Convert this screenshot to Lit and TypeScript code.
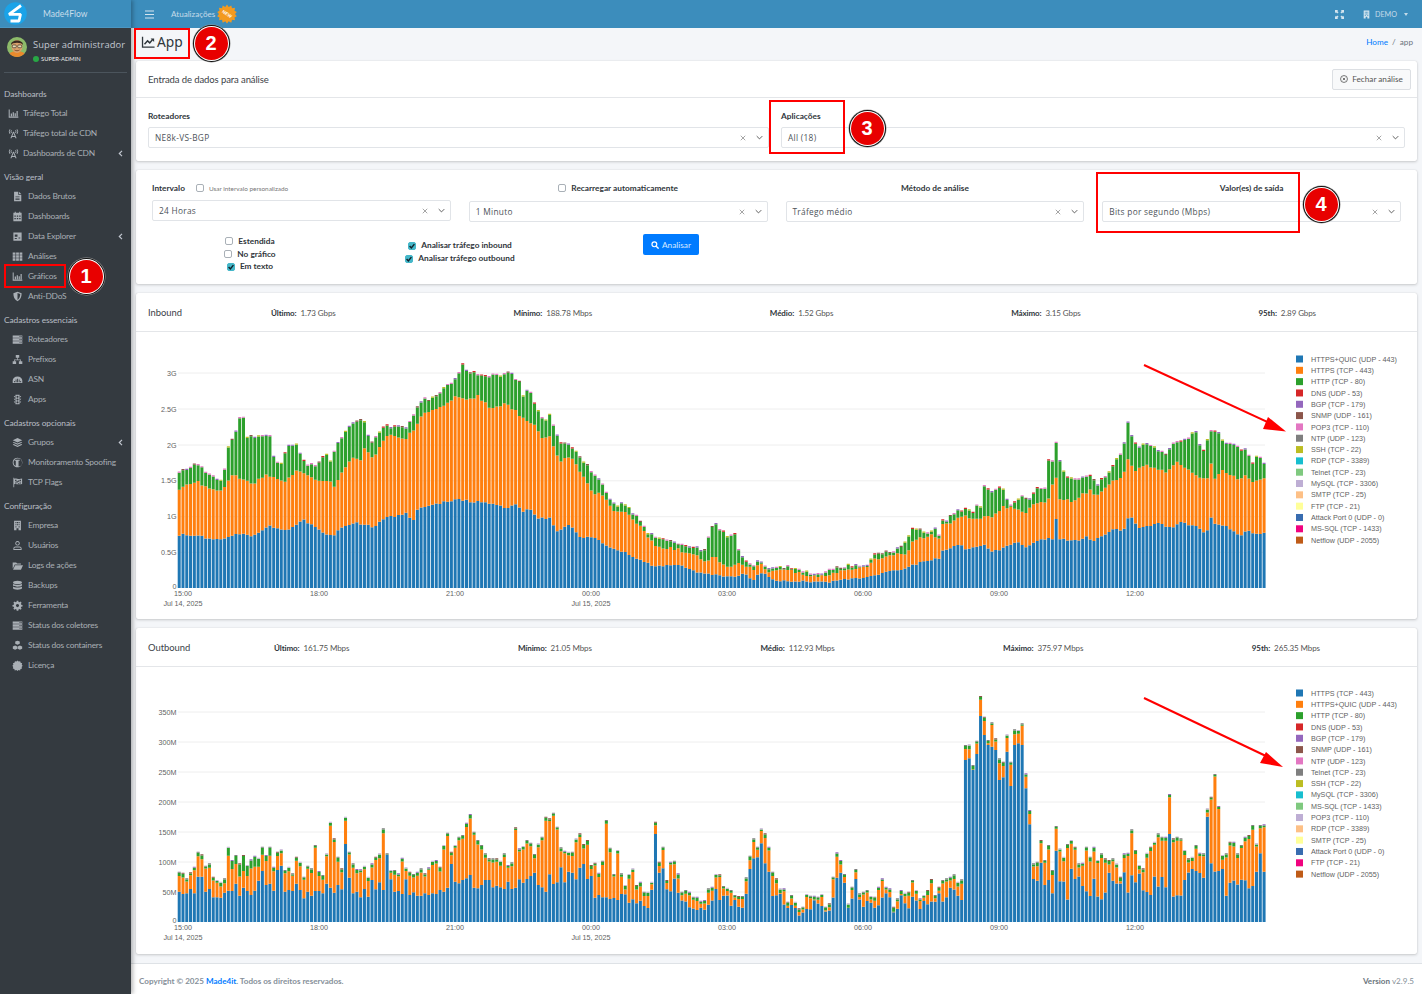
import { LitElement, html, css, svg } from "lit";
import { customElement, property } from "lit/decorators.js";

type P = [number, number];
const hash = (i: number) => { const v = Math.sin(i * 12.9898 + 4.1) * 43758.5453; return v - Math.floor(v); };
const pairs = (a: number[], ox: number, sx: number, oy: number): P[] => {
  const r: P[] = [];
  for (let i = 0; i < a.length; i += 2) r.push([ox + a[i] / sx, oy + a[i + 1] / 3]);
  return r;
};
const interp = (pts: P[], x: number) => {
  if (x <= pts[0][0]) return pts[0][1];
  for (let i = 1; i < pts.length; i++) {
    if (x <= pts[i][0]) {
      const [x0, y0] = pts[i - 1], [x1, y1] = pts[i];
      return y0 + ((y1 - y0) * (x - x0)) / (x1 - x0 || 1);
    }
  }
  return pts[pts.length - 1][1];
};
const nearest = (pts: P[], x: number) => {
  let best = pts[0], d = 1e9;
  for (const p of pts) { const q = Math.abs(p[0] - x); if (q < d) { d = q; best = p; } }
  return best[1];
};

const X0 = 177.7, PITCH = 3.78, BW = 3.02, N = 288;
const C = { blue: "#1f77b4", orange: "#ff7f0e", green: "#2ca02c" };
const CAPS1 = ["#d62728", "#9467bd", "#8c564b", "#e377c2", "#bcbd22", "#9467bd", "#e377c2"];
const CAPS2 = ["#7f7f7f", "#9467bd", "#8c564b", "#c5b0d5", "#7f7f7f"];
const rect = (x: number, top: number, bot: number) => `M${x.toFixed(2)} ${top.toFixed(2)}H${(x + BW).toFixed(2)}V${bot.toFixed(2)}H${x.toFixed(2)}Z`;

function layers(rows: { b: number; o: number; g: number; t: number; cap: string }[], base: number) {
  let db = "", dog = "", dg = "";
  const caps: Record<string, string> = {};
  rows.forEach((r, i) => {
    const x = X0 + i * PITCH;
    db += rect(x, r.b, base);
    dog += rect(x, r.o, r.b);
    dg += rect(x, r.g, r.o);
    caps[r.cap] = (caps[r.cap] || "") + rect(x, r.t, r.g);
  });
  return { db, dog, dg, caps };
}

/* ------- inbound data, anchors read from the picture ------- */
const inB = [
  ...pairs([113,562,125,552,170,557,240,570,300,550,340,560,390,527,440,543,490,510,560,552,580,555,600,537,640,517,700,530,740,503,800,490,820,512,830,477,870,465,900,460,950,448,1000,455,1050,458,1100,475,1130,462,1150,485,1170,473,1190,500], 140, 3, 350),
  ...pairs([0,505,30,505,50,545,90,522,120,565,160,558,200,590,250,605,300,630,350,650,420,645,480,670,520,675,580,680,610,670,640,690,660,665,700,690,800,695,850,697,900,690,1000,680,1050,665,1100,655,1150,632,1200,625], 540, 3, 350),
  ...pairs([0,605,60,585,80,600,130,585,160,605,230,578,260,592,310,565,340,567,347,498,358,567,400,575,440,560,460,575,520,535,550,540,565,505,575,502,600,538,650,518,700,535,720,515,780,535,800,552,812,502,825,520,860,530,900,558,915,542,950,550,975,550], 940, 3, 350),
];
const inO = [
  ...pairs([113,423,125,410,170,395,240,428,280,375,340,400,380,372,430,398,470,362,520,388,570,390,585,412,600,370,640,318,660,340,670,290,700,325,740,255,800,265,830,225,850,190,900,172,950,140,1000,150,1010,135,1050,175,1100,160,1150,205,1190,225], 140, 3, 350),
  ...pairs([0,260,30,262,60,335,90,320,130,375,160,430,190,432,220,485,260,490,300,530,350,590,400,595,470,615,490,635,525,620,560,655,600,635,640,660,660,640,680,665,750,660,800,675,850,680,900,665,980,650,1010,625,1060,615,1100,610,1120,570,1180,555,1200,570], 540, 3, 350),
  ...pairs([0,520,30,525,60,502,90,500,120,510,130,498,155,505,190,470,220,475,260,485,290,455,320,462,347,375,360,448,400,452,450,420,470,440,510,400,550,375,563,322,580,362,620,345,680,368,710,338,750,360,770,380,800,390,812,340,825,385,850,358,900,395,915,375,940,395,975,388], 940, 3, 350),
];
const inG = [
  ...pairs([113,373,130,363,170,345,240,398,250,385,265,296,285,258,300,205,312,203,320,265,390,255,400,318,420,345,445,290,470,285,500,350,530,345,560,310,575,340,590,282,640,220,670,205,690,280,740,228,800,235,830,178,850,140,870,155,950,85,968,38,980,65,1000,70,1050,80,1110,72,1140,100,1150,142,1165,110,1190,180], 140, 3, 350),
  ...pairs([0,198,15,218,30,196,60,280,85,285,130,335,160,370,190,412,220,465,260,465,280,495,300,510,320,548,350,565,390,570,440,595,470,597,490,610,510,545,525,518,550,550,565,560,580,550,590,555,598,612,640,650,655,630,680,660,740,652,800,670,850,673,890,655,910,650,980,645,1010,607,1060,610,1100,578,1115,535,1140,535,1160,550,1185,540,1200,558], 540, 3, 350),
  ...pairs([0,508,20,520,30,498,60,480,100,485,110,468,120,485,132,408,150,430,185,410,200,450,210,465,245,440,265,455,290,412,320,415,325,330,340,330,347,277,360,330,370,367,400,395,420,385,450,378,470,405,490,385,510,365,550,295,563,212,575,262,600,295,620,283,650,300,680,315,700,282,740,268,765,240,780,285,790,302,810,248,835,248,855,280,890,280,900,305,915,292,935,342,950,315,975,342], 940, 3, 350),
];
const inbound = () => {
  const rows = [];
  for (let i = 0; i < N; i++) {
    const x = X0 + i * PITCH + 1.5;
    const b = interp(inB, x) + (hash(i) - 0.5) * 2.2;
    const o = Math.min(b - 1, interp(inO, x) + (hash(i + 300) - 0.5) * 3);
    const g = Math.min(o - 0.6, interp(inG, x) + (hash(i + 600) - 0.5) * 3.6);
    rows.push({ b, o, g, t: g - 1.2, cap: CAPS1[Math.floor(hash(i + 900) * CAPS1.length)] });
  }
  return layers(rows, 588);
};

/* ------- outbound data ------- */
const outT = [
  ...pairs([113,545,124,548,136,565,147,547,158,530,170,485,181,493,192,527,204,520,215,560,226,570,238,575,249,565,260,470,272,510,283,495,294,520,306,495,317,525,328,508,340,497,351,503,362,470,373,495,385,470,396,530,408,485,419,478,430,540,442,530,453,550,464,500,476,515,487,560,498,527,510,535,521,465,532,543,544,555,555,490,566,395,578,445,589,500,600,535,612,380,623,485,634,520,646,537,657,538,668,527,680,560,691,520,702,500,714,490,725,415,736,490,748,540,759,540,770,550,782,503,793,532,804,545,816,552,827,545,838,535,850,550,861,532,872,512,884,510,895,530,906,465,918,428,929,485,940,465,952,440,963,435,974,398,986,372,997,425,1008,450,1020,465,1031,490,1042,505,1054,505,1065,505,1076,512,1088,490,1099,525,1110,517,1122,412,1133,475,1144,468,1156,450,1167,458,1178,492,1190,460,1201,440,1212,380,1224,385,1240,368,1251,410,1262,472,1274,482,1285,485,1296,485,1308,445,1319,430,1330,462,1342,450,1353,525,1364,518,1376,548,1387,512,1398,390,1410,473,1421,552,1433,480,1444,550,1455,585,1466,552,1478,535,1489,585], 140, 3, 690),
  ...pairs([0,575,10,605,22,575,30,395,38,515,45,470,52,570,60,515,68,512,76,550,84,605,92,600,100,605,110,620,120,632,128,630,136,595,143,590,150,552,158,553,165,588,175,593,182,600,190,615,205,618,212,562,220,497,228,445,235,470,243,415,250,430,258,470,266,545,275,565,287,595,296,635,303,615,310,635,318,655,325,650,333,612,345,617,355,620,362,612,370,650,378,640,385,560,394,487,402,510,410,552,418,640,425,590,432,537,440,610,447,605,455,600,462,618,470,620,477,590,485,565,493,590,500,595,507,650,515,625,522,600,530,608,537,605,545,570,552,600,560,625,568,615,575,600,583,567,590,615,598,590,606,570,614,565,622,560,630,553,637,575,645,568,652,165,660,163,667,225,675,152,683,18,690,80,698,150,705,97,712,145,720,205,727,215,735,133,742,215,750,118,758,120,765,100,773,250,780,360,788,520,795,515,803,450,810,510,818,465,826,540,833,408,841,475,849,500,857,462,864,450,872,470,880,520,888,518,895,470,903,500,910,470,918,510,925,490,933,505,940,510,947,505,955,520,962,560,970,490,978,488,986,418,993,480,1001,525,1009,535,1017,488,1024,470,1032,455,1040,430,1047,440,1055,440,1062,312,1070,445,1078,440,1085,445,1093,480,1100,505,1108,500,1115,465,1123,488,1130,490,1138,355,1145,320,1153,252,1160,348,1168,495,1175,490,1183,455,1190,455,1198,490,1205,465,1213,440,1220,435,1228,405,1235,460,1243,405,1250,403], 640, 2.005, 690),
];
const outB8 = [605,612,610,597,610,560,560,605,597,622,622,623,608,602,603,581,617,593,603,615,602,572,543,585,581,602,540,527,605,600,603,581,600,625,605,617,603,603,610,581,593,608,585,598,462,563,610,605,622,597,620,570,598,577,600,495,568,605,603,612,568,615,607,617,617,610,615,610,612,600,605,593,522,575,580,570,565,555,593,595,585,570,570,592,587,592,597,575,597,593,568,578,567,558,548,585,592,605,553,582,577,532,577,545,548,568,533,522,567,558,623,615,622,622,627,624,630,612,613,638,628,640,632];
const outBSpikes = pairs([30,432,38,548,45,535,220,537,228,505,235,502,243,460,250,520,258,545,430,567,645,630,652,210,660,205,667,240,675,192,683,78,690,135,698,165,705,170,712,180,720,270,727,262,735,185,742,288,750,165,758,160,765,165,773,295,780,403,788,567,795,572,803,518,810,585,826,610,833,482,1062,432,1138,380,1145,520,1160,543,1235,545,1243,490,1250,545], 640, 2.005, 690);
const outGreen = (i: number) => {
  const thick: Record<number, number> = { 13: 8, 14: 8, 15: 8, 16: 12, 17: 15, 18: 10, 19: 8, 20: 10, 21: 8, 22: 7, 23: 5, 24: 8 };
  if (thick[i]) return thick[i];
  return 1.4 + hash(i + 40) * 2.6;
};
const outbound = () => {
  const rows = [];
  for (let i = 0; i < N; i++) {
    const x = X0 + i * PITCH + 1.5;
    const t = nearest(outT, x);
    const H = 922 - t;
    let b: number;
    if (i < outB8.length) b = 690 + outB8[i] / 3;
    else {
      const sp = outBSpikes.find((s) => Math.abs(s[0] - x) < 1.9);
      if (sp) b = sp[1];
      else if (x < 960) b = 922 - H * (0.45 + hash(i + 70) * 0.4);
      else b = 922 - Math.min(H * 0.85, 22 + hash(i + 70) * 32);
    }
    const g = t + 1.1;
    const o = Math.min(g + outGreen(i), Math.max(b - 0.4, g + 0.6));
    rows.push({ b: Math.max(b, o), o, g, t, cap: CAPS2[Math.floor(hash(i + 900) * CAPS2.length)] });
  }
  return layers(rows, 922);
};

const LEG_COLORS = ["#1f77b4", "#ff7f0e", "#2ca02c", "#d62728", "#9467bd", "#8c564b", "#e377c2", "#7f7f7f", "#bcbd22", "#17becf", "#7fc97f", "#beaed4", "#fdc086", "#ffff99", "#386cb0", "#f0027f", "#bf5b17"];

@customElement("flow-chart")
class FlowChart extends LitElement {
  static styles = css`
    :host { display: block; }
    svg { display: block; width: 1281px; height: 287px; }
    text { font-family: "Liberation Sans", Arial, sans-serif; font-size: 7.200px; fill: #5f5f5f; }
  `;
  @property({ attribute: false }) cfg: any;
  render() {
    const c = this.cfg;
    if (!c) return html``;
    const d = c.data;
    return html`<svg viewBox="136 ${c.top} 1281 287">
      ${c.ticks.map((t: [string, number]) => svg`
        <line x1="178" x2="1265" y1=${t[1]} y2=${t[1]} stroke="#eeeeee" stroke-width="1"></line>
        <text x="176.500" y=${t[1] + 2.5} text-anchor="end">${t[0]}</text>`)}
      <text x="176.500" y=${c.base + 0.5} text-anchor="end">0</text>
      <path d=${d.db} fill=${C.blue}></path>
      <path d=${d.dog} fill=${C.orange}></path>
      <path d=${d.dg} fill=${C.green}></path>
      ${Object.keys(d.caps).map((k) => svg`<path d=${d.caps[k]} fill=${k}></path>`)}
      ${["15:00", "18:00", "21:00", "00:00", "03:00", "06:00", "09:00", "12:00"].map((l, i) => svg`
        <text x=${183 + i * 136} y=${c.base + 8} text-anchor="middle">${l}</text>`)}
      <text x="183" y=${c.base + 18} text-anchor="middle">Jul 14, 2025</text>
      <text x="591" y=${c.base + 18} text-anchor="middle">Jul 15, 2025</text>
      ${c.legend.map((l: string, i: number) => svg`
        <rect x="1296" y=${c.legendY + i * 11.32 - 3.5} width="7" height="7" fill=${LEG_COLORS[i]}></rect>
        <text x="1311" y=${c.legendY + i * 11.32 + 2.6}>${l}</text>`)}
    </svg>`;
  }
}

const I: Record<string, any> = {
  bars: svg`<path d="M1 2v12h14v-1.5H2.500V2zM4 8h1.800v4H4zM6.800 6h1.800v6H6.800zM9.600 7.500h1.800V12H9.600zM12.400 4.500h1.800V12h-1.800z"/>`,
  tower: svg`<path d="M7.300 5.500h1.400L12.500 15h-1.700l-.6-2H5.800l-.6 2H3.500zM6.400 11.500h3.200L8 7.300z"/><path d="M2.800 2a7 7 0 0 0 0 6.500M13.200 2a7 7 0 0 1 0 6.500M5 3.300a3.800 3.800 0 0 0 0 3.800M11 3.300a3.800 3.800 0 0 1 0 3.800" fill="none" stroke="currentColor" stroke-width="1.400"/>`,
  file: svg`<path fill-rule="evenodd" d="M3 1h6v4.500h4.500V15H3zM5 8v1h6V8zM5 10v1h6v-1zM5 12v1h6v-1z"/><path d="M10 1l3.500 3.500H10z"/>`,
  cal: svg`<path fill-rule="evenodd" d="M4 1h1.500v1.500h5V1H12v1.500h2V15H2V2.500h2zM3.500 6.500v2h2v-2zM7 6.500v2h2v-2zM10.500 6.500v2h2v-2zM3.500 10v2h2v-2zM7 10v2h2v-2zM10.500 10v2h2v-2z"/>`,
  form: svg`<path fill-rule="evenodd" d="M2 2h12v12H2zM4 5v3.500h4V5zM4 10v1.500h3V10zM9.500 9.500V11H12V9.500z"/>`,
  grid: svg`<path d="M1 2h4v3.500H1zM6 2h4v3.500H6zM11 2h4v3.500h-4zM1 6.300h4v3.500H1zM6 6.300h4v3.500H6zM11 6.300h4v3.500h-4zM1 10.600h4v3.500H1zM6 10.600h4v3.500H6zM11 10.600h4v3.500h-4z"/>`,
  shield: svg`<path fill-rule="evenodd" d="M8 1l6 2.300c0 5-1.500 9.200-6 11.700C3.500 12.500 2 8.300 2 3.300zM8 3v10c2.800-1.900 3.900-4.800 4-8.500z"/>`,
  server: svg`<path fill-rule="evenodd" d="M1 2h14v3.400H1zM1 6.300h14v3.400H1zM1 10.600h14V14H1zM11 3v1.300h1.300V3zM13 3v1.300h1V3zM11 7.300v1.300h1.300V7.300zM13 7.300v1.300h1V7.300zM11 11.600v1.300h1.300v-1.300zM13 11.600v1.300h1v-1.300z"/>`,
  sitemap: svg`<path d="M5.500 1.500h5v4h-5zM1 10.500h5v4H1zM10 10.500h5v4h-5zM7.500 5.500h1V8H13v2.500h-1V9H4v1.500H3V8h4.500z"/>`,
  asn: svg`<path fill-rule="evenodd" d="M1 13V9.500C1 6 4 3.500 8 3.500s7 2.500 7 6V13zM3 10v2h1.200v-2zM5.300 8v4h1.200V8zM7.500 7v5h1.200V7zM9.800 8v4H11V8zM12 10v2h1.200v-2z"/>`,
  traffic: svg`<path fill-rule="evenodd" d="M5 1h6v14H5zM8 2.500a1.500 1.500 0 1 0 .001 0zM8 6.500a1.500 1.500 0 1 0 .001 0zM8 10.500a1.500 1.500 0 1 0 .001 0z"/><path d="M2.500 3H4.500V5.500zM2.500 7H4.500V9.500zM2.500 11H4.500V13.500zM13.500 3H11.500V5.500zM13.500 7H11.500V9.500zM13.500 11H11.500V13.500z"/>`,
  layers: svg`<path d="M8 1.500l7 3.300-7 3.300-7-3.300z"/><path d="M2.600 7.100L8 9.600l5.400-2.500L15 8l-7 3.200L1 8z"/><path d="M2.600 10.300L8 12.800l5.400-2.500 1.600.9-7 3.300-7-3.300z"/>`,
  spoof: svg`<path fill-rule="evenodd" d="M8 1a7 7 0 1 1-.001 0zM8 2.300a5.700 5.700 0 0 0-2.500 10.800V5.500H3.800V4h7.400v1.500H9.500v8.300A5.700 5.700 0 0 0 8 2.300z"/>`,
  flag: svg`<path fill-rule="evenodd" d="M2 1h1.200v1.400C6 1 9 4.300 14.700 2.300V10C9 12 6 9 3.200 10.400V15H2zM4.500 4v2h2V4zM8.500 5v2h2V5zM4.500 8v1.500h2V8zM8.500 9v1.300h2V9zM11 4v2h2V4zM11 8v1.500h2V8zM6.500 6v2h2V6z"/>`,
  build: svg`<path fill-rule="evenodd" d="M3 1h10v14H9.500v-3h-3v3H3zM5 3v1.800h1.500V3zM7.300 3v1.800h1.500V3zM9.600 3v1.800h1.500V3zM5 6v1.800h1.500V6zM7.300 6v1.800h1.500V6zM9.600 6v1.800h1.500V6zM5 9v1.800h1.500V9zM9.600 9v1.800h1.500V9z"/>`,
  user: svg`<path d="M8 1.500a3.300 3.300 0 1 1-.001 0zM8 2.800a2 2 0 1 0 .001 0zM2 14.500v-2c0-1.800 1.500-3 3-3h6c1.500 0 3 1.200 3 3v2zM3.300 13.200h9.400v-.7c0-1-.8-1.700-1.700-1.700H5c-.9 0-1.700.7-1.700 1.700z" fill-rule="evenodd"/>`,
  folder: svg`<path d="M1 12V3.500h5l1.500 1.500H13v1.500H4L1.500 12z"/><path d="M4.500 7.500H16L13 14H1.500z"/>`,
  db: svg`<ellipse cx="8" cy="3.500" rx="6.500" ry="2.300"/><path d="M1.500 5.300c1 2 12 2 13 0v2.700c-1 2.300-12 2.300-13 0zM1.500 9.300c1 2 12 2 13 0v2.700c-1 2.800-12 2.800-13 0z"/>`,
  cog: svg`<path fill-rule="evenodd" d="M6.800 1h2.400l.3 1.900 1.200.5 1.600-1.100 1.700 1.700-1.100 1.600.5 1.200 1.900.3v2.400l-1.900.3-.5 1.200 1.100 1.600-1.700 1.700-1.600-1.100-1.200.5-.3 1.900H6.800l-.3-1.900-1.200-.5-1.600 1.100L2 12.600l1.100-1.600-.5-1.200L.7 9.500V7.100l1.900-.3.5-1.200L2 4l1.700-1.700 1.600 1.100 1.200-.5zM8 5.800a2.300 2.300 0 1 0 .001 0z"/>`,
  cubes: svg`<path d="M8 1l3.300 1.300v3.300L8 7 4.700 5.600V2.300zM4.500 8l3.200 1.300v3.400l-3.200 1.300-3.300-1.300V9.300zM11.500 8l3.300 1.300v3.400L11.500 14l-3.200-1.300V9.300z"/>`,
  cert: svg`<path d="M8 .8l1.700 1.500 2.200-.6.700 2.200 2.200.7-.6 2.200L15.500 8.500 14 10.200l.6 2.200-2.200.7-.7 2.200-2.200-.6L8 16l-1.700-1.300-2.200.6-.7-2.200-2.200-.7.6-2.200L.5 8.500 2 6.800l-.6-2.200 2.200-.7.7-2.200 2.200.6z"/>`,
};
const icon = (n: string) => html`<svg class="ico" viewBox="0 0 16 16" fill="currentColor">${I[n]}</svg>`;

const NAV: [string, [string, string, boolean?][]][] = [
  ["Dashboards", [["bars", "Tráfego Total"], ["tower", "Tráfego total de CDN"], ["tower", "Dashboards de CDN", true]]],
  ["Visão geral", [["file", "Dados Brutos"], ["cal", "Dashboards"], ["form", "Data Explorer", true], ["grid", "Análises"], ["bars", "Gráficos"], ["shield", "Anti-DDoS"]]],
  ["Cadastros essenciais", [["server", "Roteadores"], ["sitemap", "Prefixos"], ["asn", "ASN"], ["traffic", "Apps"]]],
  ["Cadastros opcionais", [["layers", "Grupos", true], ["spoof", "Monitoramento Spoofing"], ["flag", "TCP Flags"]]],
  ["Configuração", [["build", "Empresa"], ["user", "Usuários"], ["folder", "Logs de ações"], ["db", "Backups"], ["cog", "Ferramenta"], ["server", "Status dos coletores"], ["cubes", "Status dos containers"], ["cert", "Licença"]]],
];

const sel = (text: string) => html`<div class="sel"><span class="sv">${text}</span>
  <svg class="sx" viewBox="0 0 8 8"><path d="M1 1l6 6M7 1L1 7" stroke="#888" stroke-width="1" fill="none"/></svg>
  <svg class="sc" viewBox="0 0 10 6"><path d="M1 1l4 4 4-4" stroke="#444" stroke-width="1.200" fill="none"/></svg></div>`;
const chk = (on: boolean) => html`<span class="cb ${on ? "on" : ""}">${on ? html`<svg viewBox="0 0 10 10"><path d="M2 5l2.200 2.400L8 2.600" stroke="#10212a" stroke-width="1.800" fill="none"/></svg>` : ""}</span>`;

const LEG1 = ["HTTPS+QUIC (UDP - 443)", "HTTPS (TCP - 443)", "HTTP (TCP - 80)", "DNS (UDP - 53)", "BGP (TCP - 179)", "SNMP (UDP - 161)", "POP3 (TCP - 110)", "NTP (UDP - 123)", "SSH (TCP - 22)", "RDP (TCP - 3389)", "Telnet (TCP - 23)", "MySQL (TCP - 3306)", "SMTP (TCP - 25)", "FTP (TCP - 21)", "Attack Port 0 (UDP - 0)", "MS-SQL (TCP - 1433)", "Netflow (UDP - 2055)"];
const LEG2 = ["HTTPS (TCP - 443)", "HTTPS+QUIC (UDP - 443)", "HTTP (TCP - 80)", "DNS (UDP - 53)", "BGP (TCP - 179)", "SNMP (UDP - 161)", "NTP (UDP - 123)", "Telnet (TCP - 23)", "SSH (TCP - 22)", "MySQL (TCP - 3306)", "MS-SQL (TCP - 1433)", "POP3 (TCP - 110)", "RDP (TCP - 3389)", "SMTP (TCP - 25)", "Attack Port 0 (UDP - 0)", "FTP (TCP - 21)", "Netflow (UDP - 2055)"];
const CFG1 = { top: 332, base: 588, legendY: 359, legend: LEG1, data: inbound(), ticks: [["0.5G", 552.3], ["1G", 516.7], ["1.5G", 480.8], ["2G", 445], ["2.5G", 409], ["3G", 373]] };
const CFG2 = { top: 667, base: 922, legendY: 693, legend: LEG2, data: outbound(), ticks: [["50M", 892], ["100M", 862], ["150M", 832], ["200M", 802], ["250M", 772], ["300M", 742], ["350M", 712]] };

const stats = (s: string[][], cls: string) => html`<div class="stats ${cls}">${s.map((x) => html`<span><b>${x[0]}:</b> ${x[1]}</span>`)}</div>`;

@customElement("app-root")
export class AppRoot extends LitElement {
  static styles = css`
    :host { display: block; position: relative; width: 1422px; height: 994px; overflow: hidden; background: #f4f6f9; font-family: Lato, "Noto Sans", sans-serif; color: #343a40; }
    .layout { display: flex; height: 994px; }
    .ico { width: 11px; height: 11px; flex: none; display: block; }

    aside { width: 131px; flex: none; background: #343a40; color: #b4b9bf; box-shadow: 2px 0 4px rgba(0,0,0,.28); z-index: 2; }
    .brand { height: 28px; background: #3c8dbc; display: flex; align-items: center; position: relative; box-sizing: border-box; padding-left: 4px; border-bottom: 1px solid #4b96c2; }
    .brand svg { width: 23px; height: 23px; flex: none; }
    .brand span { margin-left: 16px; font-size: 8.500px; color: #c9deeb; }
    .user { height: 45px; margin: 0 4px 0 4px; border-bottom: 1px solid #4b545c; display: flex; align-items: flex-start; box-sizing: border-box; padding: 10px 0 0 3px; }
    .avatar { width: 20px; height: 22px; flex: none; margin-top: -2px; }
    .uinfo { margin-left: 6px; }
    .uname { color: #c2c7d0; line-height: 13px; white-space: nowrap; font-family: "Open Sans", sans-serif; font-size: 9.400px; letter-spacing: .1px; }
    .urole { display: flex; align-items: center; font-size: 5.800px; color: #eee; line-height: 10px; margin-top: 3px; }
    .dot { width: 6px; height: 6px; border-radius: 50%; background: #28a745; margin-right: 2px; }
    nav { padding-top: 7px; }
    .sh { height: 23px; box-sizing: border-box; padding: 5px 0 0 4px; font-size: 8.400px; letter-spacing: -.1px; line-height: 18px; color: #b9bec5; white-space: nowrap; }
    .it { height: 20px; display: flex; align-items: center; padding-left: 12px; font-size: 8.400px; letter-spacing: -.2px; color: #a9afb5; position: relative; white-space: nowrap; }
    .it .ico { margin-right: 5px; width: 11px; height: 11px; }
    .first .it { padding-left: 8px; }
    .first .it .ico { margin-right: 4px; }
    .chev { position: absolute; left: 118px; top: 7px; width: 5px; height: 7px; }

    main { flex: 1; display: flex; flex-direction: column; min-width: 0; }
    .top { height: 28px; flex: none; background: #3c8dbc; display: flex; align-items: center; color: #c4dbe9; font-size: 8.100px; position: relative; }
    .burger { margin-left: 14px; width: 9px; height: 9px; }
    .upd { margin-left: 17px; }
    .burst { width: 20px; height: 20px; margin-left: 2px; }
    .burst text { font-family: "Liberation Sans", sans-serif; font-size: 4.500px; font-weight: bold; fill: #fff; }
    .spacer { flex: 1; }
    .demo { display: flex; align-items: center; margin-right: 14px; font-size: 7.200px; }
    .demo .ico { width: 9px; height: 9px; }
    .demo .ex { margin-right: 18px; }
    .demo .bl { margin-right: 4px; }
    .caret { width: 0; height: 0; border: 2.500px solid transparent; border-top: 3px solid #c4dbe9; border-bottom: 0; margin-left: 7px; }
    .title { height: 33px; flex: none; display: flex; align-items: center; justify-content: space-between; padding: 0 9px 6px 10px; box-sizing: border-box; }
    .title h1 { margin: 0; font-weight: 400; font-size: 13.800px; display: flex; align-items: center; color: #2f363c; font-family: "Noto Sans", sans-serif; }
    .title h1 svg { width: 14px; height: 14px; margin-right: 2px; }
    .crumb { font-size: 8.200px; color: #6c757d; }
    .crumb a { color: #007bff; }
    .crumb i { font-style: normal; margin: 0 4px; }

    .cards { display: flex; flex-direction: column; gap: 9px; padding: 0 5px; }
    .card { background: #fff; border-radius: 2px; box-shadow: 0 0 1px rgba(0,0,0,.16), 0 1px 3px rgba(0,0,0,.18); }
    .c1 { height: 100px; } .c2 { height: 114px; box-sizing: border-box; } .c3 { height: 326px; }
    .ch { height: 36px; display: flex; align-items: center; justify-content: space-between; padding: 0 6px 0 12px; border-bottom: 1px solid #e4e6e9; font-size: 9.500px; letter-spacing: -.1px; color: #3b4248; box-sizing: content-box; }
    .btn { height: 21px; width: 79px; box-sizing: border-box; display: flex; align-items: center; justify-content: center; gap: 4px; border: 1px solid #dcdfe3; background: #f8f9fa; border-radius: 2px; font-size: 8.200px; letter-spacing: 0; color: #555; }
    .btn svg { width: 8px; height: 8px; }
    .two { display: grid; grid-template-columns: 621px 624px; column-gap: 12px; padding: 12px 12px 0; }
    .lbl { font-size: 8.300px; font-weight: 700; color: #30363b; line-height: 12px; margin-bottom: 5px; }
    .sel { height: 21px; box-sizing: border-box; border: 1px solid #e1e4e8; border-radius: 2px; display: flex; align-items: center; padding: 0 5px 0 6px; background: #fff; }
    .sv { flex: 1; font-family: "Open Sans", sans-serif; font-size: 8.300px; letter-spacing: .3px; color: #4d5359; white-space: nowrap; }
    .sx { width: 6px; height: 6px; margin-right: 10px; }
    .sc { width: 7px; height: 5px; }
    .four { display: grid; grid-template-columns: repeat(4, 1fr); column-gap: 18px; padding: 12px 16px 0; }
    .fc { display: flex; flex-direction: column; }
    .fl { height: 12px; margin-bottom: 7px; display: flex; align-items: center; justify-content: center; font-size: 8.300px; font-weight: 700; color: #30363b; white-space: nowrap; }
    .fl.left { justify-content: flex-start; margin-bottom: 6px; }
    .small { font-weight: 400; font-size: 6.400px; color: #777; }
    .cb { width: 8px; height: 8px; box-sizing: border-box; border: 1px solid #a9b0b7; border-radius: 2px; background: #fff; display: inline-block; margin-right: 5px; flex: none; }
    .cb.on { background: #45b7c9; border-color: #45b7c9; }
    .cb svg { display: block; width: 8px; height: 8px; margin: -1px; }
    .ml { margin-left: 11px; }
    .three { display: grid; grid-template-columns: repeat(3, 210px); padding: 13px 0 0 9px; }
    .opts { display: flex; flex-direction: column; align-items: center; font-size: 8.300px; font-weight: 700; color: #30363b; }
    .opts div { display: flex; align-items: center; }
    .o1 { line-height: 12.700px; }
    .o2 { padding-top: 4px; line-height: 13px; }
    .go { justify-self: center; width: 56px; height: 21px; margin: -1px 0 0 2px; border-radius: 2px; background: #007bff; color: #d8e9ff; display: flex; align-items: center; justify-content: center; gap: 3px; font-size: 8.300px; }
    .go svg { width: 8px; height: 8px; }

    .hd { display: flex; align-items: center; padding: 1px 12px 0; border-bottom: 1px solid #e4e6e9; box-sizing: border-box; height: 39px; }
    .hd .nm { width: 123px; flex: none; font-size: 9.400px; color: #3b4248; }
    .stats { flex: 1; display: flex; justify-content: space-between; padding-right: 89px; font-size: 8px; letter-spacing: -.1px; color: #555; }
    .stats b { color: #30363b; margin-right: 2px; }
    .stats.out { margin-left: 3px; padding-right: 85px; }

    footer { margin-top: 9px; flex: 1; background: #fff; border-top: 1px solid #dee2e6; display: flex; align-items: center; justify-content: space-between; padding: 3px 8px 0 8px; font-size: 8.100px; font-weight: 700; color: #869099; }
    footer a { color: #007bff; }
    footer .v b { color: #6c757d; }
    footer .v { font-weight: 400; }

    .mark { position: absolute; border: 2px solid #f00; box-sizing: border-box; pointer-events: none; z-index: 5; }
    .num { position: absolute; width: 33px; height: 33px; margin: -16.500px 0 0 -16.500px; border-radius: 50%; background: #e80000; color: #fff; font: 700 20px/33px "Liberation Sans", sans-serif; text-align: center; box-shadow: 0 0 0 1px #fff, 0 0 0 2px #111, 0 0 0 2.500px #999; z-index: 6; }
    .arrows { position: absolute; left: 0; top: 0; width: 1422px; height: 994px; z-index: 4; pointer-events: none; }
  `;

  render() {
    return html`<div class="layout">
      <aside>
        <div class="brand">
          <svg viewBox="0 0 23 23"><circle cx="11.500" cy="11.500" r="11.300" fill="#1aa3e8"></circle><path d="M17 3.500L5 12.300h11.500L15 19H6.500" fill="none" stroke="#fff" stroke-width="2.800" stroke-linejoin="bevel"></path></svg>
          <span>Made4Flow</span>
        </div>
        <div class="user">
          <svg class="avatar" viewBox="0 0 20 22">
            <circle cx="10" cy="11" r="10" fill="#8dbb6a"></circle>
            <path d="M2.500 17.500c2-3.500 13-3.500 15 0A10 10 0 0 1 10 21a10 10 0 0 1-7.500-3.500z" fill="#e98a2d"></path>
            <ellipse cx="10" cy="10.500" rx="5.500" ry="6.500" fill="#d9a06b"></ellipse>
            <path d="M4 9c-.5-6 12.500-6 12 0-1.500-3-10.500-3-12 0z" fill="#3a2a20"></path>
            <rect x="5.300" y="9" width="4" height="2.700" rx="1" fill="#e9d8b0" stroke="#222" stroke-width=".6"></rect>
            <rect x="10.700" y="9" width="4" height="2.700" rx="1" fill="#e9d8b0" stroke="#222" stroke-width=".6"></rect>
            <path d="M7.500 14c1.500 1 3.500 1 5 0" stroke="#6a3a20" stroke-width=".8" fill="none"></path>
          </svg>
          <div class="uinfo"><div class="uname">Super administrador</div><div class="urole"><span class="dot"></span>SUPER-ADMIN</div></div>
        </div>
        <nav>
          ${NAV.map(([h, items], n) => html`<div class=${n === 0 ? "first" : ""}>
            <div class="sh">${h}</div>
            ${items.map(([ic, t, ch]) => html`<div class="it">${icon(ic)}<span>${t}</span>${ch ? html`<svg class="chev" viewBox="0 0 5 7"><path d="M4 .8L1.300 3.500 4 6.200" fill="none" stroke="#c2c7d0" stroke-width="1.200"></path></svg>` : ""}</div>`)}
          </div>`)}
        </nav>
      </aside>
      <main>
        <div class="top">
          <svg class="burger" viewBox="0 0 9 9"><path d="M0 1h9M0 4.500h9M0 8h9" stroke="#d5e5ef" stroke-width="1.200"></path></svg>
          <span class="upd">Atualizações</span>
          <svg class="burst" viewBox="0 0 20 20"><polygon fill="#f39a1f" points="10,0.500 11.700,3 14.300,1.500 15,4.300 18,3.800 17.500,6.700 19.800,8 18,10 19.800,12.300 17.500,13.400 18,16.300 15,15.800 14.300,18.700 11.700,17.200 10,19.500 8.300,17.200 5.700,18.700 5,15.800 2,16.300 2.500,13.400 .2,12.300 2,10 .2,8 2.500,6.700 2,3.800 5,4.300 5.700,1.500 8.300,3"></polygon><text x="10" y="11.500" text-anchor="middle" transform="rotate(35 10 10)">NEW</text></svg>
          <span class="spacer"></span>
          <div class="demo">
            <svg class="ico ex" viewBox="0 0 10 10" fill="#d5e5ef"><path d="M0 0h3.500L2.500 1 4 2.500 2.500 4 1 2.500 0 3.500zM10 0v3.500L9 2.500 7.500 4 6 2.500 7.500 1 6.500 0zM0 10V6.500l1 1L2.500 6 4 7.500 2.500 9l1 1zM10 10H6.500l1-1L6 7.500 7.500 6 9 7.500l1-1z"></path></svg>
            <svg class="ico bl" viewBox="0 0 16 16" fill="#d5e5ef">${I.build}</svg>
            <span>DEMO</span><span class="caret"></span>
          </div>
        </div>
        <div class="title">
          <h1><svg viewBox="0 0 16 16" fill="#2f363c"><path d="M1 2v12.500h14.500V13H2.500V2z"></path><path d="M4 10.500l3.500-3.800 2.500 2.300 3-3.500" fill="none" stroke="#2f363c" stroke-width="1.700"></path><path d="M11 4h4v4z"></path></svg>App</h1>
          <div class="crumb"><a>Home</a><i>/</i>app</div>
        </div>
        <div class="cards">
          <section class="card c1">
            <div class="ch"><span>Entrada de dados para análise</span>
              <span class="btn"><svg viewBox="0 0 10 10"><circle cx="5" cy="5" r="4.300" fill="none" stroke="#555"></circle><path d="M3.500 3.500l3 3M6.500 3.500l-3 3" stroke="#555"></path></svg>Fechar análise</span></div>
            <div class="two">
              <div><div class="lbl">Roteadores</div>${sel("NE8k-VS-BGP")}</div>
              <div><div class="lbl">Aplicações</div>${sel("All (18)")}</div>
            </div>
          </section>
          <section class="card c2">
            <div class="four">
              <div class="fc"><div class="fl left">Intervalo<span class="ml"></span>${chk(false)}<span class="small">Usar intervalo personalizado</span></div>${sel("24 Horas")}</div>
              <div class="fc"><div class="fl">${chk(false)}Recarregar automaticamente</div>${sel("1 Minuto")}</div>
              <div class="fc"><div class="fl">Método de análise</div>${sel("Tráfego médio")}</div>
              <div class="fc"><div class="fl">Valor(es) de saída</div>${sel("Bits por segundo (Mbps)")}</div>
            </div>
            <div class="three">
              <div class="opts o1"><div>${chk(false)}Estendida</div><div>${chk(false)}No gráfico</div><div>${chk(true)}Em texto</div></div>
              <div class="opts o2"><div>${chk(true)}Analisar tráfego inbound</div><div>${chk(true)}Analisar tráfego outbound</div></div>
              <div class="go"><svg viewBox="0 0 10 10"><circle cx="4.200" cy="4.200" r="3" fill="none" stroke="#fff" stroke-width="1.500"></circle><path d="M6.500 6.500L9.500 9.500" stroke="#fff" stroke-width="1.700"></path></svg>Analisar</div>
            </div>
          </section>
          <section class="card c3">
            <div class="hd"><span class="nm">Inbound</span>${stats([["Último", "1.73 Gbps"], ["Mínimo", "188.78 Mbps"], ["Médio", "1.52 Gbps"], ["Máximo", "3.15 Gbps"], ["95th", "2.89 Gbps"]], "")}</div>
            <flow-chart .cfg=${CFG1}></flow-chart>
          </section>
          <section class="card c3">
            <div class="hd"><span class="nm">Outbound</span>${stats([["Último", "161.75 Mbps"], ["Mínimo", "21.05 Mbps"], ["Médio", "112.93 Mbps"], ["Máximo", "375.97 Mbps"], ["95th", "265.35 Mbps"]], "out")}</div>
            <flow-chart .cfg=${CFG2}></flow-chart>
          </section>
        </div>
        <footer><span>Copyright © 2025 <a>Made4it</a>. Todos os direitos reservados.</span><span class="v"><b>Version</b> v2.9.5</span></footer>
      </main>
    </div>

    <svg class="arrows" viewBox="0 0 1422 994">
      <path d="M1144 365L1272 424" stroke="#f00" stroke-width="2"></path><polygon points="1286,431.500 1268,417 1263,429" fill="#f00"></polygon>
      <path d="M1144 698L1268 757" stroke="#f00" stroke-width="2"></path><polygon points="1283,767 1266,752 1260,763" fill="#f00"></polygon>
    </svg>
    <div class="mark" style="left:4px;top:264px;width:62px;height:24px"></div>
    <div class="mark" style="left:134px;top:28px;width:56px;height:31px"></div>
    <div class="mark" style="left:769px;top:100px;width:76px;height:54px"></div>
    <div class="mark" style="left:1096px;top:172px;width:204px;height:61px"></div>
    <div class="num" style="left:86px;top:276px">1</div>
    <div class="num" style="left:211px;top:43px">2</div>
    <div class="num" style="left:867px;top:128px">3</div>
    <div class="num" style="left:1321px;top:204px">4</div>`;
  }
}
